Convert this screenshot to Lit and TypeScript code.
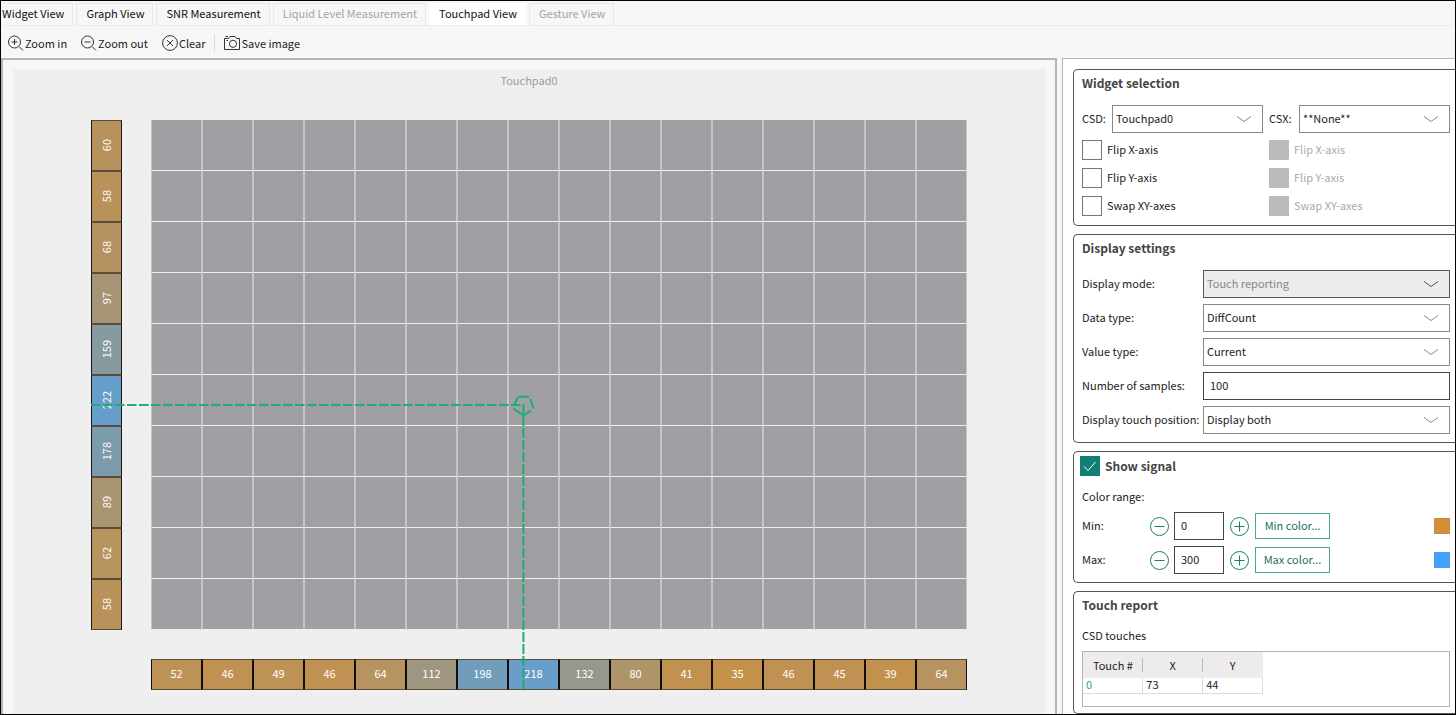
import { LitElement, html, css, svg } from "lit";
import { customElement, state } from "lit/decorators.js";

const ROWS = [60, 58, 68, 97, 159, 222, 178, 89, 62, 58];
const COLS = [52, 46, 49, 46, 64, 112, 198, 218, 132, 80, 41, 35, 46, 45, 39, 64];
const MIN_COLOR = [214, 142, 51];
const MAX_COLOR = [63, 164, 255];
const MAX = 300;

const signalColor = (v: number) =>
  `rgb(${MIN_COLOR.map((c, i) => Math.round(c + ((MAX_COLOR[i] - c) * v) / MAX)).join(",")})`;

const FLIPS = ["Flip X-axis", "Flip Y-axis", "Swap XY-axes"];

const icons = {
  zoomIn: svg`<circle cx="6.5" cy="7" r="6"/><path d="M3.500 7h6M6.500 4v6M11 11.500l4 4"/>`,
  zoomOut: svg`<circle cx="6.5" cy="7" r="6"/><path d="M3.500 7h6M11 11.500l4 4"/>`,
  clear: svg`<circle cx="8" cy="8" r="7.4"/><path d="M5 5l6 6M11 5l-6 6"/>`,
  camera: svg`<path d="M.5 3.500h4l1.500-2h5l1.500 2h3v11H.5zM1.500 1.500h2.500M2.500 5.500h1.500"/><circle cx="9" cy="8.800" r="3.600"/>`,
};

@customElement("app-root")
export class AppRoot extends LitElement {
  @state() private tab = "Touchpad View";

  static styles = css`
    :host {
      display: block;
      font-family: "Noto Sans CJK SC", "Noto Sans", sans-serif;
      font-size: 11px;
      line-height: 16px;
      color: #222;
    }
    * { box-sizing: border-box; }
    button, input, select { font: inherit; color: inherit; margin: 0; border-radius: 0; }
    svg { fill: none; }
    .window {
      display: flex;
      flex-direction: column;
      min-height: 100vh;
      border: 1px solid #000;
      background: #f7f7f7;
      overflow: hidden;
    }
    .tabs {
      display: flex;
      gap: 3px;
      padding-top: 2px;
      margin-left: -9px;
      border-bottom: 1px solid #ececec;
    }
    .tab {
      height: 22px;
      padding: 0 8px 3px 9px;
      border: 1px solid #e9e9e9;
      border-bottom: 0;
      background: #f7f7f7;
      color: #111;
      white-space: nowrap;
    }
    .tab:disabled { color: #a3a3a3; }
    .tab.active { background: #fff; border-color: #fff; padding-bottom: 4px; }
    .toolbar {
      display: flex;
      align-items: center;
      gap: 14px;
      height: 32px;
      padding: 2px 7px 0;
    }
    .tool {
      display: flex;
      align-items: center;
      gap: 1px;
      padding: 0;
      border: 0;
      background: none;
      white-space: nowrap;
    }
    .tool svg { width: 16px; height: 16px; stroke: #333; }
    .tools { display: flex; align-items: center; gap: 9px; }
    .divider { width: 1px; height: 18px; background: #dcdcdc; }
    .body { display: flex; flex: 1; gap: 5px; }
    .view {
      flex: 1;
      min-width: 0;
      display: flex;
      border: 2px solid #b6b6b6;
      border-bottom: 0;
      padding: 9px 9px 0 10px;
    }
    .stage {
      flex: 1;
      min-width: 0;
      padding: 3px 79px 24px 78px;
      background: #efefef;
    }
    .title {
      margin: 0 0 32px;
      font-size: 11px;
      font-weight: 400;
      line-height: 16px;
      text-align: center;
      color: #9c9c9c;
    }
    .plot {
      position: relative;
      display: grid;
      grid-template-columns: 31px 1fr;
      gap: 29px;
    }
    .rows { display: grid; grid-auto-rows: 51px; }
    .cols { grid-column: 2; display: grid; grid-template-columns: repeat(16, 1fr); }
    .sensor {
      display: flex;
      align-items: center;
      justify-content: center;
      border: 1px solid #5b4c3a;
      color: #fff;
    }
    .rows .sensor { border-left-color: #1c1712; border-right-color: #1c1712; padding-right: 2px; }
    .rows span { writing-mode: vertical-rl; transform: rotate(180deg); }
    .cols .sensor {
      height: 31px;
      padding-bottom: 3px;
      border-left-color: #110d08;
      border-right-color: #110d08;
    }
    .pad {
      display: grid;
      grid-template-columns: repeat(16, 1fr);
      grid-auto-rows: 51px;
    }
    .cell {
      background: #a09fa4;
      border: solid #c6c6ca;
      border-width: 0 1px;
      border-bottom: 1px solid #efefef;
    }
    .touch {
      position: absolute;
      inset: 0;
      width: 100%;
      height: 100%;
      stroke: #1fad74;
      stroke-width: 2;
      pointer-events: none;
      overflow: visible;
    }
    .settings {
      flex: 0 0 393px;
      display: flex;
      flex-direction: column;
      gap: 8px;
      padding: 10px 0 0 10px;
      border: solid #b6b6b6;
      border-width: 1px 0 0 1px;
      background: #fff;
    }
    .card {
      padding: 4px 5px 6px 8px;
      border: 1px solid #555;
      border-right: 0;
      border-radius: 5px 0 0 5px;
    }
    .heading {
      margin: 0;
      height: 18px;
      font-size: 12px;
      line-height: 18px;
      font-weight: 700;
      color: #444;
    }
    .pair { display: grid; grid-template-columns: 1fr 1fr; column-gap: 6px; margin-top: 13px; }
    .source { display: grid; grid-template-columns: 30px 1fr; align-items: center; }
    .flips { display: grid; gap: 8px; margin-top: 7px; padding-bottom: 3px; }
    .check { display: flex; align-items: center; gap: 5px; height: 20px; line-height: 20px; }
    .check span { padding-bottom: 2px; }
    .box {
      appearance: none;
      width: 20px;
      height: 20px;
      border: 1px solid #777;
      background: #fff;
    }
    .box:disabled { background: #bdbaba; border-color: #bdbaba; }
    .check.off { color: #a9a9a9; }
    .tickbox { display: grid; }
    .tickbox > * { grid-area: 1 / 1; }
    .tickbox svg { width: 20px; height: 20px; stroke: #fff; pointer-events: none; }
    .tickbox .box:checked { background: #0f8071; border-color: #0f8071; }
    .pick { display: grid; align-items: center; }
    .pick > * { grid-area: 1 / 1; }
    .pick svg {
      justify-self: end;
      width: 16px;
      height: 8px;
      margin-right: 11px;
      stroke: #888;
      pointer-events: none;
    }
    .pick select {
      appearance: none;
      width: 100%;
      height: 28px;
      padding: 0 28px 2px 3px;
      border: 1px solid #888;
      background: #fff;
    }
    .pick select:disabled { background: #edebeb; border-color: #555; color: #888; opacity: 1; }
    .pick select:disabled + svg { stroke: #555; }
    .form {
      display: grid;
      grid-template-columns: 121px 1fr;
      gap: 6px 0;
      align-items: center;
      margin-top: 13px;
      padding-bottom: 2px;
    }
    .form > label, .source > label, .limit > label { padding-bottom: 2px; }
    .field {
      width: 100%;
      height: 28px;
      padding: 0 6px 2px;
      border: 1px solid #444;
      background: #fff;
    }
    .signal { display: flex; align-items: center; gap: 5px; height: 20px; margin-left: -2px; }
    .range { margin: 12px 0 8px; }
    .limits { display: grid; gap: 6px; padding-bottom: 2px; }
    .limit { display: flex; align-items: center; gap: 5px; }
    .limit label { width: 62px; }
    .limit .field { width: 50px; }
    .step { width: 20px; height: 20px; padding: 0; border: 0; background: none; display: flex; }
    .step svg { width: 20px; height: 20px; stroke: #17806d; }
    .stepper { display: flex; align-items: center; gap: 5px; }
    .color {
      width: 75px;
      height: 26px;
      padding: 0 0 2px;
      border: 1px solid #4aa796;
      background: #fff;
      color: #17705f;
      margin-left: 1px;
    }
    .swatch { width: 16px; height: 16px; margin-left: auto; border: 1px solid #8a8a8a55; }
    .subhead { margin: 13px 0 8px; }
    .report { height: 56px; border: 1px solid #b5b5b5; }
    .report table { border-collapse: collapse; table-layout: fixed; width: 180px; }
    .report th {
      height: 26px;
      padding: 0;
      background: #edebeb;
      font-weight: 400;
      background-image: linear-gradient(#bbb, #bbb);
      background-size: 1px 14px;
      background-position: right center;
      background-repeat: no-repeat;
    }
    .report th:last-child { background-image: none; }
    .report td {
      height: 15px;
      padding: 0 3px 1px;
      line-height: 13px;
      border: solid #dcdcdc;
      border-width: 0 1px 1px 0;
    }
    .report td.id { color: #1fb079; }
  `;

  private pick(id: string, value: string, disabled = false) {
    return html`<div class="pick">
      <select id=${id} ?disabled=${disabled}><option>${value}</option></select>
      <svg viewBox="0 0 16 8"><path d="M1 1.5L8 6.5L15 1.5" /></svg>
    </div>`;
  }

  private tool(label: string, icon: unknown) {
    return html`<button class="tool"><svg viewBox="0 0 16 16">${icon}</svg>${label}</button>`;
  }

  private flips(disabled: boolean) {
    return html`<div class="flips">
      ${FLIPS.map(
        (f) => html`<label class="check ${disabled ? "off" : ""}">
          <input class="box" type="checkbox" ?disabled=${disabled} /><span>${f}</span>
        </label>`
      )}
    </div>`;
  }

  private limit(name: string, value: number, color: number[]) {
    const id = name.toLowerCase();
    return html`<div class="limit">
      <label for=${id}>${name}:</label>
      <div class="stepper">
        <button class="step" aria-label="Decrease">
          <svg viewBox="0 0 20 20"><circle cx="10.5" cy="10.5" r="9" /><path d="M5.5 10.5h10" /></svg>
        </button>
        <input class="field" id=${id} .value=${String(value)} />
        <button class="step" aria-label="Increase">
          <svg viewBox="0 0 20 20"><circle cx="10.5" cy="10.5" r="9" /><path d="M5.5 10.5h10M10.5 5.5v10" /></svg>
        </button>
      </div>
      <button class="color">${name} color...</button>
      <span class="swatch" style="background:rgb(${color.join(",")})"></span>
    </div>`;
  }

  render() {
    const tabs: [string, boolean][] = [
      ["Widget View", false],
      ["Graph View", false],
      ["SNR Measurement", false],
      ["Liquid Level Measurement", true],
      ["Touchpad View", false],
      ["Gesture View", true],
    ];
    const sensor = (v: number) =>
      html`<div class="sensor" style="background:${signalColor(v)}"><span>${v}</span></div>`;
    return html`<div class="window">
      <nav class="tabs">
        ${tabs.map(
          ([t, off]) => html`<button
            class="tab ${t === this.tab ? "active" : ""}"
            ?disabled=${off}
            @click=${() => (this.tab = t)}
          >${t}</button>`
        )}
      </nav>
      <div class="toolbar">
        ${this.tool("Zoom in", icons.zoomIn)} ${this.tool("Zoom out", icons.zoomOut)}
        <div class="tools">
          ${this.tool("Clear", icons.clear)}
          <span class="divider"></span>
          ${this.tool("Save image", icons.camera)}
        </div>
      </div>
      <div class="body">
        <main class="view">
          <div class="stage">
            <h2 class="title">Touchpad0</h2>
            <div class="plot">
              <div class="rows">${ROWS.map(sensor)}</div>
              <div class="pad">${ROWS.map(() => COLS.map(() => html`<div class="cell"></div>`))}</div>
              <div class="cols">${COLS.map(sensor)}</div>
              <svg class="touch" viewBox="0 0 876 570" preserveAspectRatio="none">
                <path d="M0 285H432" stroke-dasharray="9.5 2.5" />
                <path d="M432.4 284V569" stroke-dasharray="10 2" />
                <path d="M427 276.7H438M439.500 279L442.500 288.5M440 290.5L432.4 295.5L422.5 288.5M423 286L426.5 277.5" />
              </svg>
            </div>
          </div>
        </main>
        <aside class="settings">
          <section class="card">
            <h3 class="heading">Widget selection</h3>
            <div class="pair">
              <div class="source"><label for="csd">CSD:</label>${this.pick("csd", "Touchpad0")}</div>
              <div class="source"><label for="csx">CSX:</label>${this.pick("csx", "**None**")}</div>
              ${this.flips(false)} ${this.flips(true)}
            </div>
          </section>
          <section class="card">
            <h3 class="heading">Display settings</h3>
            <div class="form">
              <label for="mode">Display mode:</label>${this.pick("mode", "Touch reporting", true)}
              <label for="data">Data type:</label>${this.pick("data", "DiffCount")}
              <label for="value">Value type:</label>${this.pick("value", "Current")}
              <label for="samples">Number of samples:</label><input class="field" id="samples" value="100" />
              <label for="position">Display touch position:</label>${this.pick("position", "Display both")}
            </div>
          </section>
          <section class="card">
            <div class="signal">
              <span class="tickbox">
                <input class="box" id="signal" type="checkbox" checked />
                <svg viewBox="0 0 20 20"><path d="M4 10.5l4 4L15.500 6" /></svg>
              </span>
              <label class="heading" for="signal">Show signal</label>
            </div>
            <div class="range">Color range:</div>
            <div class="limits">
              ${this.limit("Min", 0, MIN_COLOR)} ${this.limit("Max", MAX, MAX_COLOR)}
            </div>
          </section>
          <section class="card">
            <h3 class="heading">Touch report</h3>
            <div class="subhead">CSD touches</div>
            <div class="report">
              <table>
                <thead><tr><th>Touch #</th><th>X</th><th>Y</th></tr></thead>
                <tbody><tr><td class="id">0</td><td>73</td><td>44</td></tr></tbody>
              </table>
            </div>
          </section>
        </aside>
      </div>
    </div>`;
  }
}
